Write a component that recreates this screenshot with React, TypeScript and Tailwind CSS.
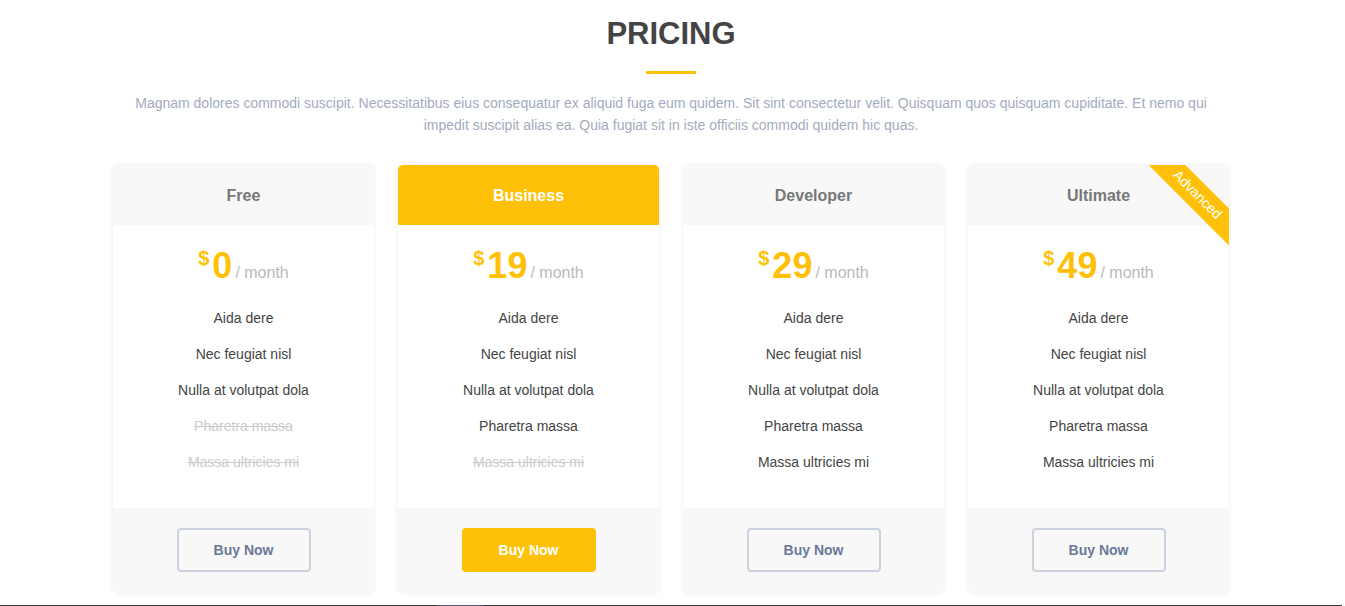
type Plan = {
  name: string;
  price: number;
  features: { label: string; na?: boolean }[];
  featured?: boolean;
  advanced?: boolean;
};

const plans: Plan[] = [
  {
    name: "Free",
    price: 0,
    features: [
      { label: "Aida dere" },
      { label: "Nec feugiat nisl" },
      { label: "Nulla at volutpat dola" },
      { label: "Pharetra massa", na: true },
      { label: "Massa ultricies mi", na: true },
    ],
  },
  {
    name: "Business",
    price: 19,
    featured: true,
    features: [
      { label: "Aida dere" },
      { label: "Nec feugiat nisl" },
      { label: "Nulla at volutpat dola" },
      { label: "Pharetra massa" },
      { label: "Massa ultricies mi", na: true },
    ],
  },
  {
    name: "Developer",
    price: 29,
    features: [
      { label: "Aida dere" },
      { label: "Nec feugiat nisl" },
      { label: "Nulla at volutpat dola" },
      { label: "Pharetra massa" },
      { label: "Massa ultricies mi" },
    ],
  },
  {
    name: "Ultimate",
    price: 49,
    advanced: true,
    features: [
      { label: "Aida dere" },
      { label: "Nec feugiat nisl" },
      { label: "Nulla at volutpat dola" },
      { label: "Pharetra massa" },
      { label: "Massa ultricies mi" },
    ],
  },
];

function PricingCard({ plan }: { plan: Plan }) {
  return (
    <div className="relative flex flex-col overflow-hidden rounded-[5px] bg-white shadow-[0_0_5px_rgba(0,0,0,0.08)]">
      {plan.advanced && (
        <span className="absolute top-[17px] right-[-68px] z-10 w-[200px] rotate-45 bg-[#ffc107] pt-[2px] pb-[4px] text-center text-[14px] leading-[20px] text-white">
          Advanced
        </span>
      )}
      <h3
        className={
          plan.featured
            ? "h-[60px] bg-[#ffc107] pt-[1px] text-center text-[16px] font-bold leading-[60px] text-white"
            : "h-[60px] bg-[#f8f8f8] pt-[1px] text-center text-[16px] font-bold leading-[60px] text-[#777777]"
        }
      >
        {plan.name}
      </h3>

      <div className="flex items-start justify-center pt-[23px] text-[#ffc107]">
        <span className="text-[20px] font-bold leading-[20px]">$</span>
        <div className="ml-[3px] flex items-baseline">
          <span className="text-[36px] font-bold leading-[36px]">{plan.price}</span>
          <span className="ml-[3px] text-[16px] text-[#bababa]">/ month</span>
        </div>
      </div>

      <ul className="mt-[15px] pb-[28px] text-center text-[14px] leading-[20px]">
        {plan.features.map((f) => (
          <li
            key={f.label}
            className={f.na ? "py-[8px] text-[#cccccc] line-through" : "py-[8px] text-[#444444]"}
          >
            {f.label}
          </li>
        ))}
      </ul>

      <div className="flex justify-center bg-[#f8f8f8] pt-[20px] pb-[21px]">
        {plan.featured ? (
          <button className="h-[44px] w-[134px] rounded-[4px] bg-[#ffc107] text-[14px] font-bold text-white">
            Buy Now
          </button>
        ) : (
          <button className="h-[44px] w-[134px] rounded-[4px] border-2 border-[#cdd2e0] text-[14px] font-bold text-[#6b7898]">
            Buy Now
          </button>
        )}
      </div>
    </div>
  );
}

export default function App() {
  return (
    <div className="min-h-[606px] bg-white pr-[3px] font-['Liberation_Sans',Arial,sans-serif]">
      <section className="mx-auto w-[1116px] pt-[18px]">
        <div className="flex flex-col items-center">
          <h2 className="text-[31px] font-bold leading-[31px] text-[#444444]">PRICING</h2>
          <span className="mt-[22px] h-[3px] w-[50px] bg-[#ffc107]" />
          <p className="mt-[18px] text-center text-[14px] leading-[22px] text-[#a3abc0]">
            Magnam dolores commodi suscipit. Necessitatibus eius consequatur ex aliquid fuga eum
            quidem. Sit sint consectetur velit. Quisquam quos quisquam cupiditate. Et nemo qui
            impedit suscipit alias ea. Quia fugiat sit in iste officiis commodi quidem hic quas.
          </p>
        </div>

        <div className="mt-[29px] grid grid-cols-4 gap-[24px]">
          {plans.map((p) => (
            <PricingCard key={p.name} plan={p} />
          ))}
        </div>
      </section>

      <footer className="mt-[12px] h-[20px] bg-[#36363b]">
        <div className="ml-[436px] h-[20px] w-[48px] bg-[#5b5475]" />
      </footer>
    </div>
  );
}
